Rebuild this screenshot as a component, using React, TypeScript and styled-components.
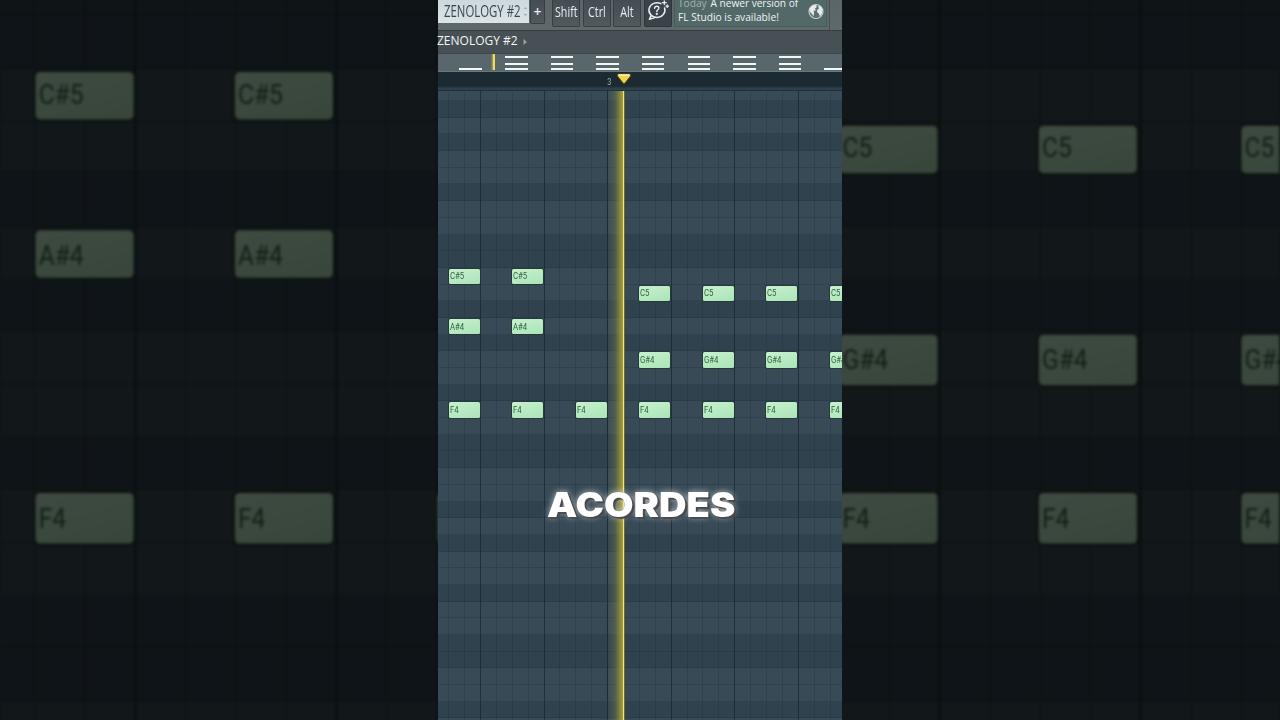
import React from 'react';
import styled, { createGlobalStyle, css } from 'styled-components';

const Global = createGlobalStyle`
  * { box-sizing: border-box; }
  html, body { margin: 0; padding: 0; background: #0e1417; }
  body { width: 1280px; height: 720px; overflow: hidden; font-family: "Open Sans", "Noto Sans", sans-serif; }
`;

const Stage = styled.main`
  position: relative;
  width: 1280px;
  height: 720px;
  overflow: hidden;
  display: flex;
  justify-content: center;
`;

/* ---------- piano roll grid ---------- */

const ROW = 16.69;
const STEP = 63.54;
const PATTERN = 'LDLDLLDLLDDL';

const Roll = styled.div`
  position: relative;
  width: 404px;
  height: 629px;
  overflow: hidden;
  background: #374a56;
`;

const Rows = styled.div`
  display: flex;
  flex-direction: column;
  margin-top: -6.7px;
`;

const KeyRow = styled.div<{ $dark: boolean }>`
  flex: none;
  height: ${ROW}px;
  background: ${(p) => (p.$dark ? '#2f424e' : '#374a56')};
  border-bottom: 1px solid rgba(18, 36, 46, 0.18);
`;

const Columns = styled.div`
  position: absolute;
  inset: 0;
  background:
    linear-gradient(90deg, transparent 169px, #1a2c36 169px, #1a2c36 170.2px, transparent 170.2px),
    repeating-linear-gradient(90deg, rgba(18, 34, 43, 0.55) 0 1px, transparent 1px ${STEP}px) -21.5px 0 / 500px 100%,
    repeating-linear-gradient(90deg, rgba(18, 34, 43, 0.2) 0 1px, transparent 1px ${STEP / 4}px) -21.5px 0 / 500px 100%;
`;

const NoteBox = styled.div<{ $x: number; $y: number }>`
  position: absolute;
  left: ${(p) => p.$x}px;
  top: ${(p) => p.$y}px;
  width: 31px;
  height: 15.3px;
  padding-left: 1px;
  border-radius: 1.5px;
  background: linear-gradient(165deg, #c8f0d0 0%, #b8ebc2 50%, #ade2b8 100%);
  box-shadow: 0 0 0 0.8px #20382f;
  overflow: hidden;
`;

const NoteName = styled.span`
  display: block;
  width: max-content;
  margin-top: 0.6px;
  font: 400 8.8px/15.6px Roboto, "Liberation Sans", sans-serif;
  color: #2f6240;
  transform: scaleX(0.88);
  transform-origin: 0 50%;
`;

const Playhead = styled.div`
  position: absolute;
  left: 170px;
  top: 0;
  width: 17px;
  height: 100%;
  background: linear-gradient(90deg, rgba(150, 145, 60, 0.05) 0, rgba(140, 138, 70, 0.3) 7px, rgba(165, 158, 52, 0.72) 12px, #aaa03a 15px, #f2e680 15px, #f2e680 16.2px, #6b6a35 16.2px);
`;

type NoteDef = { beat: number; semitone: number; name: string };
const NOTES: NoteDef[] = [
  ...[0, 1].map((beat) => ({ beat, semitone: 8, name: 'C#5' })),
  ...[0, 1].map((beat) => ({ beat, semitone: 5, name: 'A#4' })),
  ...[3, 4, 5, 6].map((beat) => ({ beat, semitone: 7, name: 'C5' })),
  ...[3, 4, 5, 6].map((beat) => ({ beat, semitone: 3, name: 'G#4' })),
  ...[0, 1, 2, 3, 4, 5, 6].map((beat) => ({ beat, semitone: 0, name: 'F4' })),
];

function PianoRoll() {
  return (
    <Roll>
      <Rows>
        {Array.from({ length: 39 }, (_, i) => (
          <KeyRow key={i} $dark={PATTERN[i % 12] === 'D'} />
        ))}
      </Rows>
      <Columns />
      {NOTES.map((n) => (
        <NoteBox key={n.name + n.beat} $x={10.6 + n.beat * STEP} $y={311.4 - n.semitone * ROW}>
          <NoteName>{n.name}</NoteName>
        </NoteBox>
      ))}
      <Playhead />
    </Roll>
  );
}

/* ---------- enlarged backdrop ---------- */

const Backdrop = styled.div`
  position: absolute;
  left: 438px;
  top: 91px;
  transform-origin: 202px 269px;
  transform: scale(3.165);
  filter: brightness(0.31) saturate(0.88) blur(0.45px);
`;

/* ---------- foreground panel ---------- */

const Panel = styled.section`
  position: relative;
  width: 404px;
  height: 720px;
  display: flex;
  flex-direction: column;
`;

const Toolbar = styled.header`
  display: flex;
  height: 31px;
  background: linear-gradient(#5c6568, #5f686b);
  border-bottom: 1px solid #343d41;
  overflow: hidden;
`;

const Squeezed = styled.span<{ $sx: number; $center?: boolean }>`
  display: block;
  width: max-content;
  white-space: nowrap;
  transform: scaleX(${(p) => p.$sx});
  transform-origin: ${(p) => (p.$center ? '50%' : '0')} 50%;
`;

const PatternName = styled.div`
  display: flex;
  justify-content: space-between;
  width: 91px;
  height: 23px;
  padding-left: 6px;
  background: linear-gradient(#ccd8dd, #dbe4e8);
  color: #3a464e;
  font-size: 16.5px;
  line-height: 21px;
`;

const NameSlot = styled.div`
  width: 78px;
`;

const Spinner = styled.svg`
  width: 6px;
  height: 23px;
  margin-right: 1px;
`;

const keyFace = css`
  display: flex;
  justify-content: center;
  flex: none;
  border: 1px solid #363f45;
  border-top: 0;
  border-radius: 0 0 2px 2px;
  background: linear-gradient(#444d53, #50595e);
  color: #e8eef0;
`;

const AddButton = styled.div`
  ${keyFace}
  width: 15px;
  height: 24px;
  margin: 0 7px 0 1px;
  font-size: 14px;
  font-weight: 600;
  line-height: 23px;
`;

const KeyButton = styled.div<{ $gap?: number }>`
  ${keyFace}
  width: 28px;
  height: 27px;
  margin-right: ${(p) => p.$gap ?? 2.7}px;
  font-size: 14.5px;
  line-height: 23px;
`;

const HelpButton = styled(KeyButton)`
  background: #3a4349;
  border-color: #2d363b;
`;

const Hint = styled.div`
  display: flex;
  justify-content: space-between;
  width: 153px;
  height: 27px;
  margin-left: 1px;
  padding: 0 2px 0 3px;
  background: #526869;
  border: 1px solid #485c5e;
  border-top: 0;
  color: #eef4f3;
  font-size: 10.2px;
  line-height: 14px;
`;

const HintText = styled.div`
  margin-top: -4px;
  white-space: nowrap;
`;

const HintLine = styled.div`
  display: flex;
  gap: 4px;
  letter-spacing: -0.05px;
`;

const Faded = styled.span`
  color: #a4b3b3;
`;

const ToolbarEdge = styled.div`
  width: 1px;
  height: 30px;
  margin-left: 2px;
  background: #465054;
`;

const Crumb = styled.div`
  display: flex;
  align-items: center;
  height: 22px;
  background: #475055;
  color: #f2f6f7;
  font-size: 12px;
  font-weight: 500;
  line-height: 20px;
`;

const CrumbSlot = styled.div`
  width: 86px;
  margin-left: -1px;
  padding-bottom: 2px;
`;

const Minimap = styled.div`
  position: relative;
  height: 19px;
  background: #59676d;
  border-top: 1px solid #3c474c;
  border-bottom: 1px solid #6b787d;
  overflow: hidden;
`;

const MiniMark = styled.i<{ $x: number; $y: number }>`
  position: absolute;
  left: ${(p) => p.$x}px;
  top: ${(p) => p.$y}px;
  width: 22.5px;
  height: 2px;
  background: #effaf4;
`;

const MiniHead = styled.i`
  position: absolute;
  left: 53px;
  top: 0;
  width: 4px;
  height: 16px;
  background: linear-gradient(90deg, rgba(160, 155, 60, 0.2), #a9a447 2px, #eadd62 2px);
`;

const Ruler = styled.div`
  position: relative;
  height: 19px;
  background: linear-gradient(#1c2b33, #1b2931 14px, #2c3e48 16px, #30434e 18px, #1f3039 18px);
`;

const BarNumber = styled.span`
  position: absolute;
  left: 169.3px;
  top: 4px;
  font: 400 8.5px/12px Roboto, sans-serif;
  color: #a3b0b7;
  transform: scaleX(0.85);
`;

const HeadMarker = styled.svg`
  position: absolute;
  left: 177px;
  top: 0;
  width: 18px;
  height: 15px;
`;

const Caption = styled.div`
  position: absolute;
  left: 109px;
  top: 484.5px;
  width: max-content;
  font: 900 33.5px/40px Inter, "Liberation Sans", sans-serif;
  color: #fff;
  transform: scaleX(1.138);
  transform-origin: 0 50%;
  text-shadow: 0 0 1px #555, 1px 1px 0 #4b4a4d, 2px 2px 1px #4b4a4d, 0 0 7px rgba(255, 255, 255, 0.7);
`;

function Minibar() {
  const groups = Array.from({ length: 7 }, (_, i) => 67 + i * 45.65);
  return (
    <Minimap>
      <MiniMark $x={21.3} $y={14} />
      <MiniHead />
      {groups.map((x) => (
        <React.Fragment key={x}>
          <MiniMark $x={x} $y={2} />
          <MiniMark $x={x} $y={9} />
          <MiniMark $x={x} $y={14} />
        </React.Fragment>
      ))}
      <MiniMark $x={386.3} $y={14} />
    </Minimap>
  );
}

export default function App() {
  return (
    <Stage>
      <Global />
      <Backdrop>
        <PianoRoll />
      </Backdrop>
      <Panel>
        <Toolbar>
          <PatternName>
            <NameSlot>
              <Squeezed $sx={0.69}>ZENOLOGY #2</Squeezed>
            </NameSlot>
            <Spinner viewBox="0 0 6 23">
              <path d="M1.5 9 L3.5 7 L5.5 9Z M1.5 14 L3.5 16 L5.5 14Z" fill="#a3afb5" />
            </Spinner>
          </PatternName>
          <AddButton>+</AddButton>
          <KeyButton>
            <Squeezed $sx={0.74} $center>Shift</Squeezed>
          </KeyButton>
          <KeyButton>
            <Squeezed $sx={0.74} $center>Ctrl</Squeezed>
          </KeyButton>
          <KeyButton>
            <Squeezed $sx={0.74} $center>Alt</Squeezed>
          </KeyButton>
          <HelpButton $gap={1}>
            <svg width="24" height="24" viewBox="0 0 24 24" fill="none" stroke="#e9edee" strokeWidth="1.5" strokeLinecap="round">
              <path d="M14.8 3.7 A8 7.3 0 1 0 18.6 8 M5.2 15.4 L3.4 19.2 L8.8 17.6" strokeLinejoin="round" />
              <path d="M8.6 8.2 C8.7 5.3 13.3 5.6 12.8 8.4 C12.5 9.8 10.8 9.8 10.8 11.6" />
              <circle cx="10.8" cy="14" r="0.4" />
              <path d="M18.3 0.8 V4.6 M16.4 2.7 H20.2 M21.2 5 V7.4 M20 6.2 H22.4" strokeWidth="1.3" />
            </svg>
          </HelpButton>
          <Hint>
            <HintText>
              <HintLine>
                <Faded>Today</Faded>
                <span>A newer version of</span>
              </HintLine>
              <div>FL Studio is available!</div>
            </HintText>
            <svg width="16" height="23" viewBox="0 0 16 23">
              <circle cx="8" cy="11.5" r="7" fill="#5d7071" stroke="#c9d3d2" strokeWidth="1.1" />
              <path d="M2 8 L5 5.3 L8.3 5 L8.8 7 L7 8.4 L7.8 10.2 L5.5 11 L6.2 13 L5.3 16.3 L3.7 13.5 L1.6 11.5Z M10 6 L13 6.6 L14.6 10 L14 13.6 L12 16.4 L10.8 13.6 L9 12 L9.4 9.4 L11 8.6Z" fill="#e4ebea" />
            </svg>
          </Hint>
          <ToolbarEdge />
        </Toolbar>
        <Crumb>
          <CrumbSlot>
            <Squeezed $sx={1}>ZENOLOGY #2</Squeezed>
          </CrumbSlot>
          <svg width="5" height="8" viewBox="0 0 5 8">
            <path d="M0.5 1 L4 4 L0.5 7Z" fill="#98a2a6" />
          </svg>
        </Crumb>
        <Minibar />
        <Ruler>
          <BarNumber>3</BarNumber>
          <HeadMarker viewBox="0 0 18 15">
            <path d="M2.3 2 H15.7 L15.7 4 L9 12.2 L2.3 4Z" fill="#f5d548" stroke="#4d451f" strokeWidth="1" />
            <path d="M3.5 2.9 H14.5" stroke="#fff6c4" strokeWidth="1.4" />
          </HeadMarker>
        </Ruler>
        <PianoRoll />
        <Caption>ACORDES</Caption>
      </Panel>
    </Stage>
  );
}
